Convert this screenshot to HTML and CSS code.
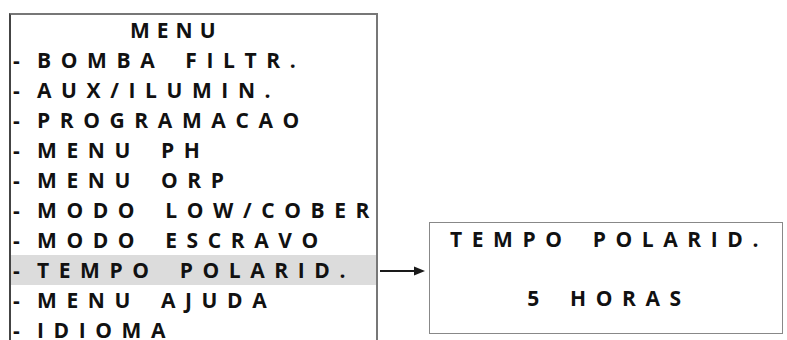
FILE: index.html
```html
<!DOCTYPE html>
<html lang="en">
<head>
  <meta charset="UTF-8">
  <title>Menu - Tempo Polarid.</title>
  <link rel="stylesheet" href="styles.css">
</head>
<body>

  <div class="screen">
    <div class="menu-box">
      <div class="menu-title">MENU</div>
      <ul class="menu-list">
        <li><span class="dash">-</span>BOMBA FILTR.</li>
        <li><span class="dash">-</span>AUX/ILUMIN.</li>
        <li><span class="dash">-</span>PROGRAMACAO</li>
        <li><span class="dash">-</span>MENU PH</li>
        <li><span class="dash">-</span>MENU ORP</li>
        <li><span class="dash">-</span>MODO LOW/COBER</li>
        <li><span class="dash">-</span>MODO ESCRAVO</li>
        <li class="selected"><span class="dash">-</span>TEMPO POLARID.</li>
        <li><span class="dash">-</span>MENU AJUDA</li>
        <li><span class="dash">-</span>IDIOMA</li>
      </ul>
    </div>

    <svg class="arrow" width="46" height="12" viewBox="0 0 46 12">
      <line x1="0" y1="6" x2="36" y2="6" stroke="#1a1a1a" stroke-width="2"/>
      <polygon points="34,1.5 45,6 34,10.5" fill="#1a1a1a"/>
    </svg>

    <div class="detail-box">
      <div class="detail-line">TEMPO POLARID.</div>
      <div class="detail-line">5 HORAS</div>
    </div>
  </div>

</body>
</html>
```

FILE: styles.css
```css
body {
  margin: 0;
  padding: 0;
  background-color: #fff;
  color: #111;
  font-family: "Open Sans", "Liberation Sans", sans-serif;
  font-weight: 700;
  font-size: 21px;
  overflow: hidden;
}

.screen {
  display: flex;
  align-items: flex-start;
  height: 340px;
}

/* left menu panel */
.menu-box {
  margin-left: 9px;
  margin-top: 13px;
  width: 365px;
  height: 360px;
  border: 2px solid #777;
  border-left-color: #444;
  border-bottom: none;
}

.menu-title {
  height: 30px;
  line-height: 30px;
  padding-left: 119px;
  letter-spacing: 7px;
}

.menu-list {
  list-style: none;
  margin: 0;
  padding: 0;
}

.menu-list li {
  height: 30px;
  line-height: 30px;
  padding-left: 2px;
  letter-spacing: 9.6px;
  word-spacing: 6px;
  white-space: pre;
}

.menu-list .dash {
  display: inline-block;
  width: 24px;
  letter-spacing: 0;
}

.menu-list li.selected {
  background-color: #dcdcdc;
}

.arrow {
  margin-left: 2px;
  margin-top: 265px;
}

/* right detail panel */
.detail-box {
  margin-left: 3px;
  margin-top: 222px;
  width: 354px;
  height: 112px;
  border: 1px solid #888;
  display: flex;
  flex-direction: column;
  align-items: center;
  padding-top: 1px;
  box-sizing: border-box;
}

.detail-line {
  height: 30px;
  line-height: 30px;
  letter-spacing: 9.6px;
  word-spacing: 6px;
  padding-left: 6px;
  white-space: pre;
}

.detail-line + .detail-line {
  margin-top: 29px;
}
```
